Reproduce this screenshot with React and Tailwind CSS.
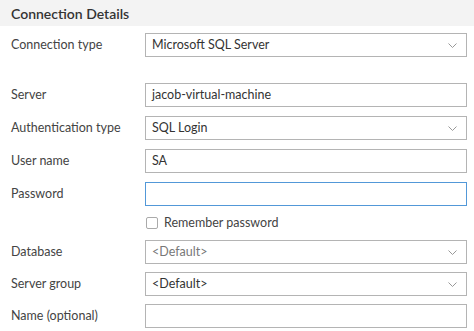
import React from 'react';

function Chevron() {
  return (
    <svg className="w-[9px] h-[5px]" viewBox="0 0 9 5" fill="none" stroke="#999" strokeWidth="1">
      <path d="M0.5 0.5 L4.5 4.5 L8.5 0.5" />
    </svg>
  );
}

function Row({ label, children }) {
  return (
    <div className="flex items-center h-6">
      <div className="w-[145px] pl-[11px] text-[12.5px] text-[#444]">{label}</div>
      <div className="w-[322px]">{children}</div>
    </div>
  );
}

function TextBox({ value = '', focused = false }) {
  return (
    <div
      className={
        'h-6 flex items-center px-[6px] text-[12.5px] text-[#333] bg-white border ' +
        (focused ? 'border-[#5298d8]' : 'border-[#b4b4b4]')
      }
    >
      {value}
    </div>
  );
}

function Select({ value, muted = false }) {
  return (
    <div className="h-6 flex items-center justify-between pl-[6px] pr-[9px] text-[12.5px] bg-white border border-[#b4b4b4]">
      <span className={muted ? 'text-[#777]' : 'text-[#333]'}>{value}</span>
      <Chevron />
    </div>
  );
}

export default function App() {
  return (
    <div className="w-[474px] h-[331px] bg-white overflow-hidden" style={{ fontFamily: 'Lato, "Open Sans", sans-serif' }}>
      <div className="h-[26px] bg-[#f3f3f3] flex items-center pl-[11px] text-[14px] font-semibold text-[#333]">
        Connection Details
      </div>
      <div className="mt-[7px]">
        <Row label="Connection type">
          <Select value="Microsoft SQL Server" />
        </Row>
      </div>
      <div className="mt-[26px] flex flex-col gap-[9px]">
        <Row label="Server">
          <TextBox value="jacob-virtual-machine" />
        </Row>
        <Row label="Authentication type">
          <Select value="SQL Login" />
        </Row>
        <Row label="User name">
          <TextBox value="SA" />
        </Row>
        <Row label="Password">
          <TextBox focused />
        </Row>
      </div>
      <div className="mt-[10px] ml-[146px] flex items-center gap-[6px] h-[14px]">
        <div className="w-3 h-3 border border-[#aaa] rounded-[2px] bg-white" />
        <span className="text-[12.5px] text-[#444]">Remember password</span>
      </div>
      <div className="mt-[10px] flex flex-col gap-[8px]">
        <Row label="Database">
          <Select value="<Default>" muted />
        </Row>
        <Row label="Server group">
          <Select value="<Default>" />
        </Row>
        <Row label="Name (optional)">
          <TextBox />
        </Row>
      </div>
    </div>
  );
}
